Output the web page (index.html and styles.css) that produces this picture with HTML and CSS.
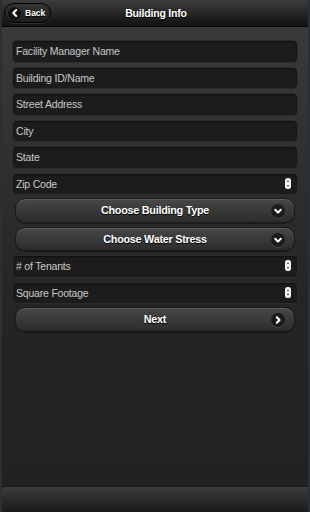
FILE: index.html
```html
<!DOCTYPE html>
<html>
<head>
<meta charset="utf-8">
  <title>Building Info</title>
  <link rel="stylesheet" href="styles.css">
</head>
<body>
<div class="page">
  <div class="header">
    <a class="back-btn" href="#">
      <span class="icon-circle">
        <svg width="12" height="12" viewBox="0 0 12 12"><path d="M7.2 3 L4.2 6 L7.2 9" fill="none" stroke="#fff" stroke-width="2" stroke-linecap="round" stroke-linejoin="round"/></svg>
      </span>
      Back
    </a>
    <h1 class="title">Building Info</h1>
  </div>

  <div class="content">
    <div class="field"><input type="text" placeholder="Facility Manager Name"></div>
    <div class="field"><input type="text" placeholder="Building ID/Name"></div>
    <div class="field"><input type="text" placeholder="Street Address"></div>
    <div class="field"><input type="text" placeholder="City"></div>
    <div class="field"><input type="text" placeholder="State"></div>
    <div class="field number">
      <input type="text" placeholder="Zip Code">
      <span class="spin"><svg width="6" height="11" viewBox="0 0 6 11"><rect x="0" y="0" width="6" height="11" rx="2.5" fill="#f2f2f2"/><path d="M1.8 4 L3 2.6 L4.2 4 Z M1.8 7 L3 8.4 L4.2 7 Z" fill="#333"/></svg></span>
    </div>

    <a class="btn" href="#">
      Choose Building Type
      <span class="btn-icon"><svg width="12" height="12" viewBox="0 0 12 12"><path d="M3.2 4.8 L6 7.6 L8.8 4.8" fill="none" stroke="#fff" stroke-width="2" stroke-linecap="round" stroke-linejoin="round"/></svg></span>
    </a>
    <a class="btn" href="#">
      Choose Water Stress
      <span class="btn-icon"><svg width="12" height="12" viewBox="0 0 12 12"><path d="M3.2 4.8 L6 7.6 L8.8 4.8" fill="none" stroke="#fff" stroke-width="2" stroke-linecap="round" stroke-linejoin="round"/></svg></span>
    </a>

    <div class="field number">
      <input type="text" placeholder="# of Tenants">
      <span class="spin"><svg width="6" height="11" viewBox="0 0 6 11"><rect x="0" y="0" width="6" height="11" rx="2.5" fill="#f2f2f2"/><path d="M1.8 4 L3 2.6 L4.2 4 Z M1.8 7 L3 8.4 L4.2 7 Z" fill="#333"/></svg></span>
    </div>
    <div class="field number">
      <input type="text" placeholder="Square Footage">
      <span class="spin"><svg width="6" height="11" viewBox="0 0 6 11"><rect x="0" y="0" width="6" height="11" rx="2.5" fill="#f2f2f2"/><path d="M1.8 4 L3 2.6 L4.2 4 Z M1.8 7 L3 8.4 L4.2 7 Z" fill="#333"/></svg></span>
    </div>

    <a class="btn" href="#">
      Next
      <span class="btn-icon"><svg width="12" height="12" viewBox="0 0 12 12"><path d="M4.8 3.2 L7.6 6 L4.8 8.8" fill="none" stroke="#fff" stroke-width="2" stroke-linecap="round" stroke-linejoin="round"/></svg></span>
    </a>
  </div>

  <div class="footer"></div>
</div>
</body>
</html>
```

FILE: styles.css
```css
* {
  box-sizing: border-box;
  margin: 0;
  padding: 0;
}

body {
  width: 310px;
  height: 512px;
  background-color: #2b2f31;
  font-family: "Liberation Sans", Arial, sans-serif;
  overflow: hidden;
}

.page {
  display: flex;
  flex-direction: column;
  height: 512px;
  border-left: 2px solid #2c3032;
  border-right: 2px solid #2c3032;
}

/* 顶部标题栏 */
.header {
  position: relative;
  height: 27px;
  display: flex;
  align-items: center;
  justify-content: center;
  background: linear-gradient(#3c3c3c, #111);
  border-bottom: 1px solid #000;
}

.title {
  font-size: 10.5px;
  font-weight: bold;
  letter-spacing: -0.2px;
  color: #fff;
  text-shadow: 0 1px 1px #000;
  margin-left: 2px;
}

.back-btn {
  position: absolute;
  left: 2px;
  top: 3px;
  height: 20px;
  width: 47px;
  display: flex;
  align-items: center;
  gap: 4px;
  padding-left: 3px;
  font-size: 8.5px;
  font-weight: bold;
  color: #fff;
  text-decoration: none;
  text-shadow: 0 1px 1px #000;
  border: 1px solid #000;
  border-radius: 10px;
  background: linear-gradient(#353535, #1c1c1c);
  box-shadow: 0 1px 0 rgba(255, 255, 255, 0.12);
}

.icon-circle {
  width: 13px;
  height: 13px;
  border-radius: 50%;
  background-color: #111;
  display: flex;
  align-items: center;
  justify-content: center;
}

/* 内容区域 */
.content {
  flex: 1;
  display: flex;
  flex-direction: column;
  gap: 4px;
  padding: 13px 10px 0 10px;
  background: linear-gradient(#3a3a3a, #252525 60%, #222);
}

.field {
  position: relative;
  height: 22.5px;
}

.field input {
  width: 100%;
  height: 22.5px;
  padding: 0 3px;
  font-family: "Liberation Sans", Arial, sans-serif;
  font-size: 10.5px;
  letter-spacing: -0.2px;
  color: #ddd;
  background-color: #1c1c1c;
  border: 1px solid #2c2c2c;
  border-radius: 5px;
  box-shadow: inset 0 1px 2px rgba(0, 0, 0, 0.5);
  outline: none;
}

.field input::placeholder {
  color: #c8c8c8;
}

.spin {
  position: absolute;
  right: 7px;
  top: 5px;
  display: flex;
}

.btn {
  position: relative;
  display: flex;
  align-items: center;
  justify-content: center;
  height: 24.5px;
  margin: 0 3px;
  font-size: 10.8px;
  font-weight: bold;
  letter-spacing: -0.25px;
  color: #fff;
  text-decoration: none;
  text-shadow: 0 1px 1px #000;
  border: 1px solid #1a1a1a;
  border-radius: 10px;
  background: linear-gradient(#474747, #2c2c2c);
  box-shadow: inset 0 1px 0 rgba(255, 255, 255, 0.12), 0 1px 1px rgba(0, 0, 0, 0.4);
}

.field + .btn {
  margin-top: -1px;
}

.btn-icon {
  position: absolute;
  right: 9px;
  top: 5px;
  width: 14px;
  height: 14px;
  border-radius: 50%;
  background-color: #1b1b1b;
  display: flex;
  align-items: center;
  justify-content: center;
  box-shadow: 0 1px 0 rgba(255, 255, 255, 0.1);
}

/* 底部栏 */
.footer {
  height: 26px;
  background: linear-gradient(#3c3c3c, #1a1a1a);
  border-top: 1px solid #1a1a1a;
}
```
